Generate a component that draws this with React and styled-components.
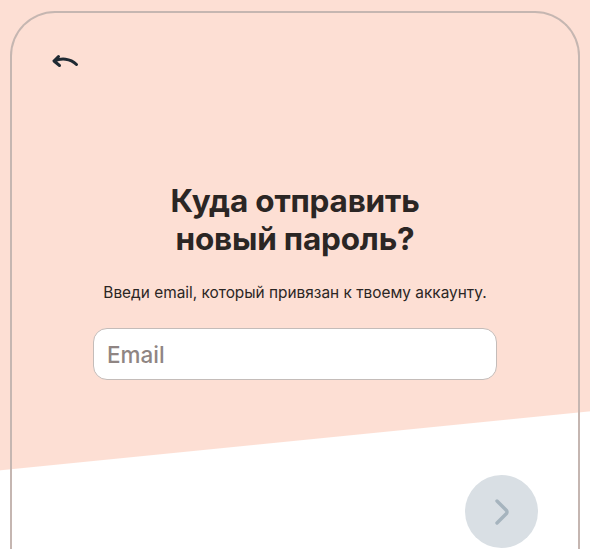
import React from "react";
import styled, { createGlobalStyle } from "styled-components";

const peach = "#fddfd4";

const GlobalStyle = createGlobalStyle`
  html, body {
    margin: 0;
    padding: 0;
  }
  body {
    font-family: Inter, "Noto Sans", sans-serif;
    overflow: hidden;
  }
`;

const Page = styled.div`
  height: 100vh;
  min-height: 549px;
  overflow: hidden;
  box-sizing: border-box;
  padding: 11px 10px 0;
  background: linear-gradient(174.29deg, ${peach} 467.5px, #ffffff 468.5px);
`;

const Card = styled.div`
  height: 580px;
  box-sizing: border-box;
  border: 2px solid #c5b6b1;
  border-bottom: none;
  border-radius: 45px 45px 0 0;
  padding: 39px 0 0;
  display: flex;
  flex-direction: column;
`;

const BackButton = styled.button`
  align-self: flex-start;
  margin-left: 39px;
  width: 28px;
  height: 18px;
  padding: 0;
  border: none;
  background: none;
  cursor: pointer;
  color: #1f2a33;
  display: flex;
`;

const Title = styled.h1`
  margin: 112px 0 0;
  text-align: center;
  font-size: 31.5px;
  line-height: 38px;
  font-weight: 700;
  letter-spacing: -0.2px;
  color: #2b2624;
`;

const Subtitle = styled.p`
  margin: 25px 0 0;
  text-align: center;
  font-size: 15.4px;
  line-height: 20px;
  color: #2b2624;
`;

const EmailInput = styled.input`
  align-self: center;
  margin-top: 25px;
  width: 404px;
  height: 52px;
  box-sizing: border-box;
  border: 1.5px solid #c4bcb9;
  border-radius: 14px;
  background: #fff;
  padding: 0 13px;
  font-family: Inter, "Noto Sans", sans-serif;
  font-size: 22.5px;
  font-weight: 500;
  color: #2b2624;
  outline: none;

  &::placeholder {
    color: #8f8583;
  }
`;

const NextButton = styled.button`
  align-self: flex-end;
  margin: 95px 40px 0 0;
  width: 73px;
  height: 73px;
  border-radius: 50%;
  border: none;
  background: #d9dfe4;
  color: #a6b4be;
  display: flex;
  align-items: center;
  justify-content: center;
  padding: 0;
  cursor: pointer;
`;

function BackArrow() {
  return (
    <svg width="28" height="18" viewBox="0 0 28 18" fill="none">
      <path
        d="M7.5 4.5 L3 9 L8.5 13.5 M3 9 C10 6, 19 6, 25.5 12.5"
        stroke="currentColor"
        strokeWidth="3"
        strokeLinecap="round"
        strokeLinejoin="round"
      />
    </svg>
  );
}

function Chevron() {
  return (
    <svg width="20" height="28" viewBox="0 0 20 28" fill="none">
      <path
        d="M5 3 L14.5 12.5 Q15.5 14 14.5 15.5 L5 25"
        stroke="currentColor"
        strokeWidth="3.4"
        strokeLinecap="round"
        strokeLinejoin="round"
      />
    </svg>
  );
}

export default function App() {
  return (
    <>
      <GlobalStyle />
      <Page>
        <Card>
          <BackButton aria-label="Назад">
            <BackArrow />
          </BackButton>
          <Title>
            Куда отправить
            <br />
            новый пароль?
          </Title>
          <Subtitle>Введи email, который привязан к твоему аккаунту.</Subtitle>
          <EmailInput type="email" placeholder="Email" />
          <NextButton aria-label="Далее">
            <Chevron />
          </NextButton>
        </Card>
      </Page>
    </>
  );
}
